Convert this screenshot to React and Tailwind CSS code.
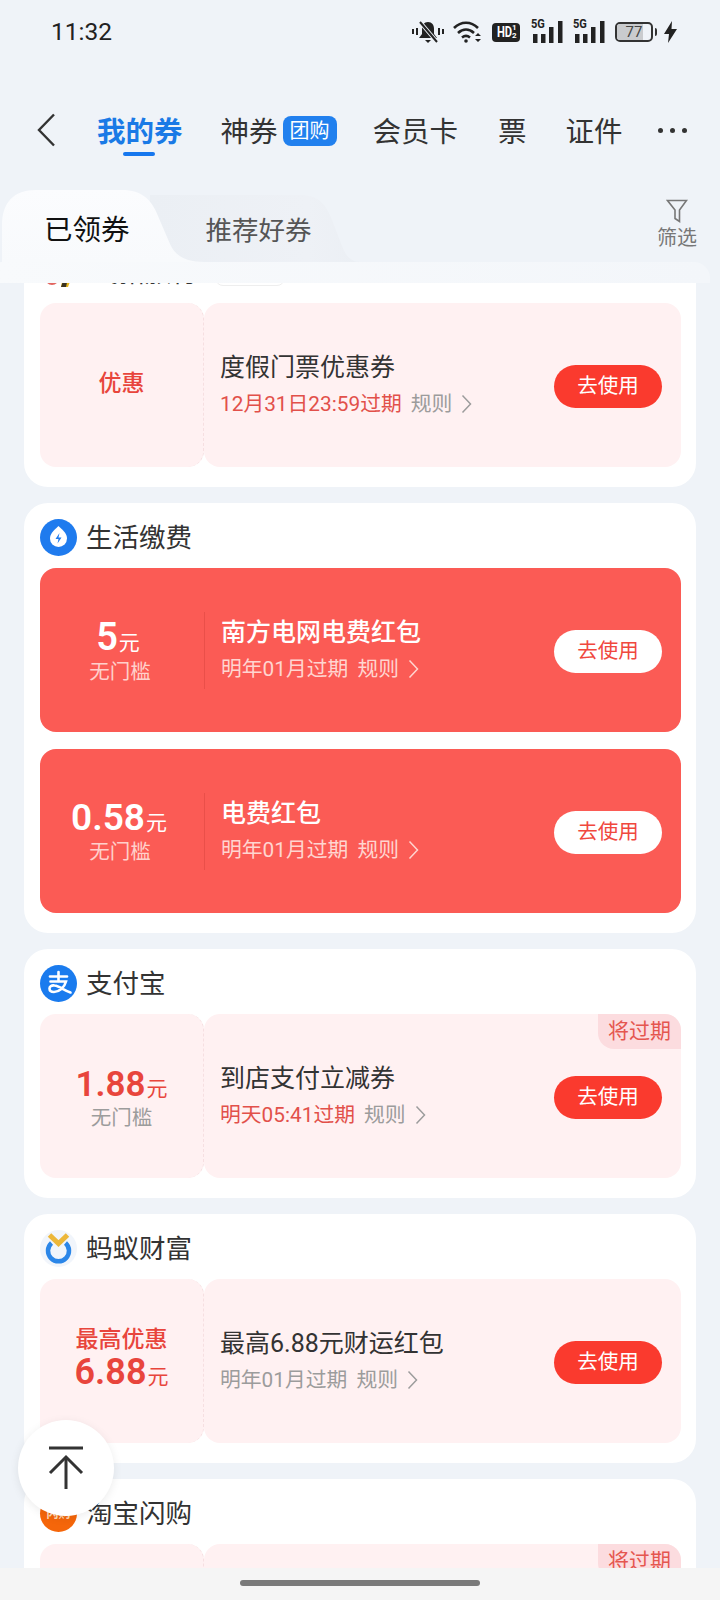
const font = { fontFamily: 'Roboto, "Noto Sans CJK SC", sans-serif' };

const Chevron = ({ className }) => (
  <svg width="11" height="20" viewBox="0 0 11 20" fill="none" className={className}>
    <path d="M1.5 1.5 L9.5 10 L1.5 18.5" stroke="currentColor" strokeWidth="1.5" />
  </svg>
);

const Bars = () => (
  <div className="relative w-[32px] h-[22px]">
    <span className="absolute left-0 top-[-4px] text-[13px] leading-[14px] font-bold text-[#222] scale-x-[0.85] origin-left">5G</span>
    <svg width="32" height="22" viewBox="0 0 32 22" className="absolute inset-0">
      <rect x="2" y="13" width="4.500" height="9" fill="#222" />
      <rect x="10" y="13" width="4.500" height="9" fill="#222" />
      <rect x="18" y="6" width="4.500" height="16" fill="#222" />
      <rect x="27" y="0" width="4.500" height="22" fill="#222" />
    </svg>
  </div>
);

function StatusBar() {
  return (
    <div className="h-[64px] flex items-center pl-[51px] text-[#222]">
      <span className="text-[24.500px] leading-none">11:32</span>
      <div className="ml-auto mr-[43px] flex items-center">
        {/* muted bell */}
        <svg width="32" height="24" viewBox="0 0 32 24" fill="#222">
          <path d="M16 2c-4 0-6 3-6 7v5l-3 4h18l-3-4V9c0-4-2-7-6-7z" />
          <path d="M13 20h6l-3 3z" />
          <path d="M8 2l17 20" stroke="#eff3f8" strokeWidth="4" />
          <path d="M8 2l17 20" stroke="#222" strokeWidth="2" />
          <rect x="0" y="9" width="2" height="5" />
          <rect x="4" y="8" width="2" height="7" />
          <rect x="26" y="8" width="2" height="7" />
          <rect x="30" y="9" width="2" height="5" />
        </svg>
        <svg width="30" height="24" viewBox="0 0 30 24" fill="none" stroke="#222" strokeWidth="2.6" className="ml-[9px]">
          <path d="M1 8c7-7 17-7 24 0" />
          <path d="M5 13c5-4.500 11-4.500 16 0" />
          <path d="M9 17.500c2.500-2 5.500-2 8 0" />
          <circle cx="13" cy="21" r="1.800" fill="#222" stroke="none" />
          <path d="M22 16l3-3 3 3zM22 19l3 3 3-3z" fill="#222" stroke="none" />
        </svg>
        <div className="ml-[9px] w-[28px] h-[19px] rounded-[4px] bg-[#222] text-white flex items-center justify-center text-[14px] leading-none font-bold">
          <span className="scale-x-[0.8]">HD</span>
          <span className="text-[8px] leading-[8px] -ml-[2px] w-[5px]">1 2</span>
        </div>
        <div className="ml-[11px]"><Bars /></div>
        <div className="ml-[10px]"><Bars /></div>
        <div className="ml-[10px] relative w-[38px] h-[20px] rounded-[5px] border-2 border-[#333] overflow-hidden flex items-center justify-center">
          <div className="absolute left-0 top-0 bottom-0 w-[77%] bg-[#c9cbce]" />
          <span className="relative text-[15px] leading-none text-[#444]">77</span>
        </div>
        <div className="ml-[2px] w-[2px] h-[8px] bg-[#333] rounded-r" />
        <svg width="13" height="22" viewBox="0 0 13 22" fill="#222" className="ml-[7px]">
          <path d="M8 0L0 13h5l-1 9 9-14H7.500z" />
        </svg>
      </div>
    </div>
  );
}

function NavTabs() {
  return (
    <div className="mt-[39px] h-[60px] flex items-center pl-[36px] text-[28.500px] leading-none text-[#333]">
      <svg width="20" height="34" viewBox="0 0 20 34" fill="none" stroke="#333" strokeWidth="2.400" className="-mt-[6px]">
        <path d="M18 1.500L3 17l15 15.500" />
      </svg>
      <div className="relative ml-[41px] font-bold text-[#1a7ae6]">
        我的券
        <div className="absolute left-[26px] top-[33px] w-[32px] h-[4px] rounded-full bg-[#1677ee]" />
      </div>
      <span className="ml-[38px]">神券</span>
      <span className="ml-[5px] w-[54px] h-[30px] -mt-[5px] rounded-[8px] bg-[#2180ee] text-white text-[20px] flex items-center justify-center">团购</span>
      <span className="ml-[36px]">会员卡</span>
      <span className="ml-[40px]">票</span>
      <span className="ml-[39px]">证件</span>
      <div className="ml-[35px] flex gap-[7px] -mt-[6px]">
        <span className="w-[5px] h-[5px] rounded-full bg-[#333]" />
        <span className="w-[5px] h-[5px] rounded-full bg-[#333]" />
        <span className="w-[5px] h-[5px] rounded-full bg-[#333]" />
      </div>
    </div>
  );
}

function SubTabs() {
  return (
    <div className="relative mt-[27px] h-[72px] flex items-center">
      <svg width="720" height="72" viewBox="0 0 720 72" className="absolute inset-0">
        <defs>
          <linearGradient id="activeTab" x1="0" y1="0" x2="0" y2="1">
            <stop offset="0" stopColor="#fbfcfe" />
            <stop offset="1" stopColor="#f8fafc" />
          </linearGradient>
          <linearGradient id="idleTab" x1="0" y1="0" x2="1" y2="0">
            <stop offset="0" stopColor="#ebeff4" />
            <stop offset="0.75" stopColor="#eef1f6" />
            <stop offset="1" stopColor="#ebeff4" />
          </linearGradient>
        </defs>
        <path d="M150 5H300C318 5 326 14 332 30L342 56C345 64 350 72 360 72H150Z" fill="url(#idleTab)" />
        <path d="M2 72V36C2 12 14 0 36 0H122C142 0 152 10 158 26L170 54C175 66 186 72 204 72Z" fill="url(#activeTab)" />
      </svg>
      <span className="relative ml-[44px] mt-[10px] text-[28.500px] leading-none text-[#111]">已领券</span>
      <span className="relative ml-[76px] mt-[10px] text-[26.500px] leading-none text-[#555]">推荐好券</span>
      <div className="relative ml-auto mr-[23px] self-start mt-[9px] flex flex-col items-center text-[#777]">
        <svg width="22" height="24" viewBox="0 0 22 24" fill="none" stroke="#777" strokeWidth="1.600">
          <path d="M1.500 1.500h19L13.500 11v11.500L9 19.500V11z" />
        </svg>
        <span className="text-[20px] leading-[24px] mt-[3px]">筛选</span>
      </div>
    </div>
  );
}

const Amount = ({ value, unit, size = "text-[35px]", color = "text-[#e8453c]", className = "" }) => (
  <div className={`flex items-baseline justify-center font-semibold leading-none ${color} ${className}`}>
    <span className={size}>{value}</span>
    <span className="text-[21px] ml-[1px] font-normal">{unit}</span>
  </div>
);

const Sub = ({ children, light }) => (
  <div className={`text-[20.500px] leading-[24px] mt-[4px] text-center ${light ? "text-[#ffd0cb]" : "text-[#9c9c9c]"}`}>{children}</div>
);

function Coupon({ left, title, expiry, urgent, solid, tag }) {
  const body = (
    <>
      <div className="flex-1 min-w-0 pl-[16px] pb-[2px]">
        <div className={`text-[25px] leading-[34px] ${solid ? "text-white font-medium" : "text-[#333]"}`}>{title}</div>
        <div className={`mt-[6px] flex items-center text-[20.800px] leading-[26px] ${solid ? "text-[#ffd5d0]" : "text-[#9c9c9c]"}`}>
          <span className={urgent ? "text-[#e2504a]" : ""}>{expiry}</span>
          <span className="ml-[9px]">规则</span>
          <Chevron className="ml-[9px]" />
        </div>
      </div>
      <button className={`mr-[19px] mt-[2px] w-[108px] h-[43px] rounded-full text-[20.500px] leading-none ${solid ? "bg-white text-[#f0483e]" : "bg-[#fa3a2e] text-white"}`}>
        去使用
      </button>
    </>
  );

  if (solid) {
    return (
      <div className="h-[164px] flex items-center rounded-[16px] bg-[#fb5b55]">
        <div className="w-[160px] shrink-0 pt-[4px]">{left}</div>
        <div className="w-[1px] h-[77px] bg-[#ea4f49] ml-[4px]" />
        {body}
      </div>
    );
  }

  return (
    <div className="h-[164px] flex">
      <div className="w-[164px] shrink-0 rounded-[16px] bg-[#fff1f2] flex items-center justify-center border-r border-dashed border-[#f6dfe1]">
        <div className="w-full pt-[4px]">{left}</div>
      </div>
      <div className="relative flex-1 flex items-center rounded-[16px] bg-[#fff1f2]">
        {tag && (
          <div className="absolute right-0 top-0 w-[83px] h-[35px] rounded-tr-[16px] rounded-bl-[16px] bg-[#fcdcdf] text-[#e5564f] text-[21px] leading-none flex items-center justify-center">
            将过期
          </div>
        )}
        {body}
      </div>
    </div>
  );
}

function Card({ logo, name, extra, children }) {
  return (
    <div className="rounded-[24px] bg-white pt-[16px] pb-[20px] pl-[16px] pr-[15px]">
      <div className="h-[37px] mb-[12px] flex items-center">
        <div className="w-[37px] h-[37px] shrink-0">{logo}</div>
        <span className="ml-[9px] mt-[2px] text-[26.500px] leading-none text-[#333]">{name}</span>
        {extra}
      </div>
      <div className="flex flex-col gap-[17px]">{children}</div>
    </div>
  );
}

const DropLogo = () => (
  <svg width="37" height="37" viewBox="0 0 37 37">
    <circle cx="18.500" cy="18.500" r="18.500" fill="#1f7bee" />
    <path d="M18.500 7c5 4.500 8.500 8 8.500 12.500a8.500 8.500 0 0 1-17 0C10 15 13.500 11.500 18.500 7z" fill="#fff" />
    <path d="M19.500 14l-4 6h3l-1 4.500 4-6h-3z" fill="#1f7bee" />
  </svg>
);

const AlipayLogo = () => (
  <svg width="37" height="37" viewBox="0 0 37 37" fill="none" stroke="#fff" strokeWidth="2.600" strokeLinecap="round">
    <circle cx="18.500" cy="18.500" r="18.500" fill="#1a7bee" stroke="none" />
    <path d="M10 11.500h17" />
    <path d="M18.500 7v9" />
    <path d="M10.500 16.500h15.500c-1.500 6-7 10.500-12 10.500-3 0-4.500-1.500-4.500-3.500s2-3.500 5-3c5 .5 9 4.500 16 7" />
  </svg>
);

const FortuneLogo = () => (
  <svg width="37" height="37" viewBox="0 0 37 37" fill="none">
    <circle cx="18.500" cy="18.500" r="18.500" fill="#f1f5fb" />
    <path d="M11.500 13a10.500 10.500 0 1 0 14 0" stroke="#2b86e8" strokeWidth="4.500" />
    <path d="M9.500 5l9 8.500 9-8.500" stroke="#ecb73a" strokeWidth="5" />
  </svg>
);

const FlashLogo = () => (
  <div className="w-[37px] h-[37px] rounded-full bg-[#f5660a] text-[#ffd9b8] text-[12px] leading-none font-bold flex items-center justify-center">闪购</div>
);

const ClippedLogo = () => (
  <svg width="37" height="37" viewBox="0 0 37 37">
    <circle cx="12" cy="24" r="7" fill="#e2655f" />
    <path d="M24 17h10l-6 16h-7z" fill="#e9b820" />
    <path d="M24 24h4l-2 9h-5z" fill="#3a3320" />
  </svg>
);

export default function App() {
  return (
    <div className="relative w-[720px] h-[1600px] overflow-hidden bg-[#eff3f8] flex flex-col" style={font}>
      <StatusBar />
      <NavTabs />
      <SubTabs />
      <div className="h-[21px] mr-[10px] rounded-tr-[16px] bg-gradient-to-r from-[#f8fafc] to-[#f3f6fa]" />

      <div className="h-[1285px] overflow-hidden">
        <div className="-mt-[45px] mx-[24px] flex flex-col gap-[16px]">
          <Card
            logo={<ClippedLogo />}
            name={<span className="ml-[6px]">飞猪旅行</span>}
            extra={<div className="ml-[17px] -mt-[4px] w-[70px] h-[30px] rounded-[8px] border border-[#eeeeee]" />}
          >
            <Coupon
              left={<div className="text-[23px] leading-none font-medium text-center text-[#e8453c] -mt-[7px]">优惠</div>}
              title="度假门票优惠券"
              expiry="12月31日23:59过期"
              urgent
            />
          </Card>

          <Card logo={<DropLogo />} name="生活缴费">
            <Coupon
              solid
              left={<div className="-mt-[3px]"><Amount value="5" unit="元" size="text-[38px]" color="text-white" className="-ml-[4px]" /><Sub light>无门槛</Sub></div>}
              title="南方电网电费红包"
              expiry="明年01月过期"
            />
            <Coupon
              solid
              left={<div className="-mt-[3px]"><Amount value="0.58" unit="元" size="text-[37px]" color="text-white" className="-ml-[2px]" /><Sub light>无门槛</Sub></div>}
              title="电费红包"
              expiry="明年01月过期"
            />
          </Card>

          <Card logo={<AlipayLogo />} name="支付宝">
            <Coupon
              left={<><Amount value="1.88" unit="元" /><Sub>无门槛</Sub></>}
              title="到店支付立减券"
              expiry="明天05:41过期"
              urgent
              tag
            />
          </Card>

          <Card logo={<FortuneLogo />} name="蚂蚁财富">
            <Coupon
              left={
                <div className="-mt-[10px]">
                  <div className="text-[23px] leading-[28px] font-medium text-center text-[#e8453c]">最高优惠</div>
                  <Amount value="6.88" unit="元" size="text-[36px]" />
                </div>
              }
              title="最高6.88元财运红包"
              expiry="明年01月过期"
            />
          </Card>

          <Card logo={<FlashLogo />} name="淘宝闪购">
            <Coupon left={null} title="" expiry="" tag />
          </Card>
        </div>
      </div>

      <div className="h-[32px] bg-[#f5f5f5] flex justify-center pt-[12px]">
        <div className="w-[240px] h-[6px] rounded-full bg-[#7a7a7a]" />
      </div>

      {/* back to top */}
      <div className="absolute left-[18px] top-[1420px] w-[96px] h-[96px] rounded-full bg-white shadow-[0_2px_10px_rgba(0,0,0,0.08)] flex items-center justify-center">
        <svg width="36" height="44" viewBox="0 0 36 44" fill="none" stroke="#333" strokeWidth="3">
          <path d="M1 2h34" />
          <path d="M18 43V11" />
          <path d="M2 27L18 11l16 16" />
        </svg>
      </div>
    </div>
  );
}
